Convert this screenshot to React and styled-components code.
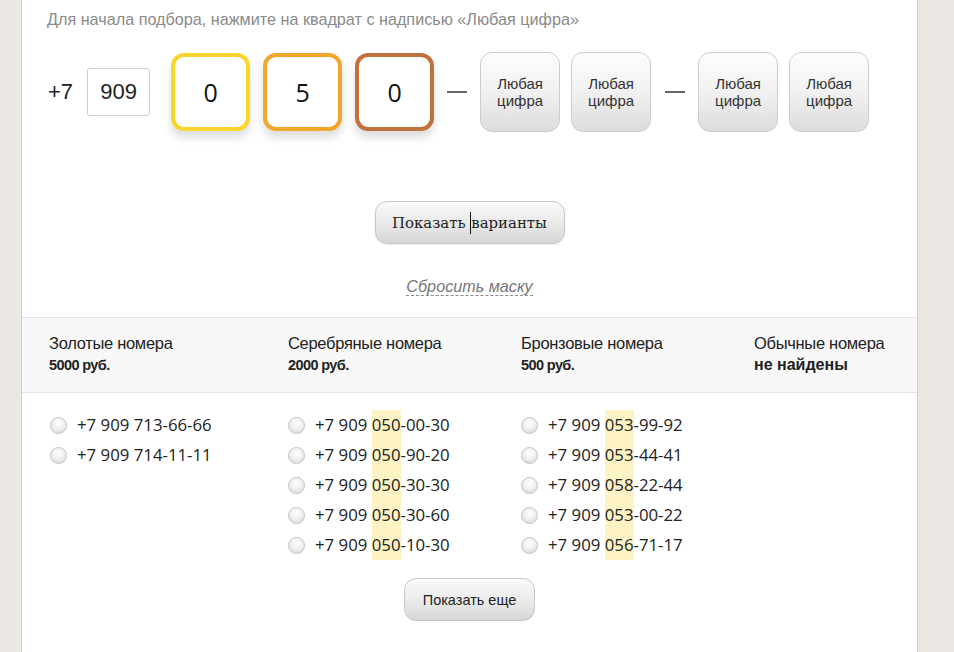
import React from "react";
import styled, { createGlobalStyle } from "styled-components";

const Global = createGlobalStyle`
  html, body { margin: 0; padding: 0; background: #ebe8e4; }
  body { font-family: Arial, "Liberation Sans", sans-serif; }
`;

const Page = styled.div`
  display: flex;
  padding-left: 21px;
  min-height: 652px;
`;

const Panel = styled.div`
  width: 895px;
  background: #fff;
  border-left: 1px solid #d3d0cb;
  border-right: 1px solid #d3d0cb;
  min-height: 652px;
`;

const Top = styled.div`
  padding: 9px 0 0 25px;
`;

const Intro = styled.div`
  font-family: "Liberation Sans", Arial, sans-serif;
  font-size: 16.2px;
  line-height: 20px;
  color: #8a8a8a;
`;

const PhoneRow = styled.div`
  display: flex;
  align-items: center;
  margin-top: 23px;
  height: 79px;
`;

const Prefix = styled.span`
  font-family: "Liberation Sans", Arial, sans-serif;
  font-size: 22px;
  color: #222;
  margin-left: 1px;
  margin-right: 14px;
`;

const CodeBox = styled.div`
  width: 61px;
  height: 46px;
  border: 1px solid #cfcfcf;
  border-radius: 3px;
  display: flex;
  align-items: center;
  justify-content: center;
  font-family: "Liberation Sans", Arial, sans-serif;
  font-size: 22px;
  color: #222;
  margin-right: 21px;
`;

const DigitBox = styled.div`
  box-sizing: border-box;
  width: 79px;
  height: 78px;
  border: 4px solid ${p => p.$color};
  border-radius: 13px;
  background: #fff;
  display: flex;
  align-items: center;
  justify-content: center;
  font-family: "Open Sans", sans-serif;
  font-size: 25px;
  color: #111;
  box-shadow: 0 7px 9px rgba(0, 0, 0, 0.13);
  margin-right: 13px;
`;

const Dash = styled.span`
  width: 20px;
  height: 2px;
  background: #666;
  margin: 0 13px 0 0;
`;

const AnyBox = styled.div`
  box-sizing: border-box;
  width: 80px;
  height: 80px;
  border: 1px solid #cdcdcd;
  border-radius: 12px;
  background: linear-gradient(#fdfdfd 0%, #f1f1f1 50%, #dcdcdc 100%);
  display: flex;
  align-items: center;
  justify-content: center;
  text-align: center;
  font-family: "Liberation Sans", Arial, sans-serif;
  font-size: 15px;
  line-height: 17px;
  color: #333;
  margin-right: ${p => (p.$last ? 14 : 11)}px;
`;

const Center = styled.div`
  display: flex;
  flex-direction: column;
  align-items: center;
`;

const ShowButton = styled.div`
  box-sizing: border-box;
  margin-top: 70px;
  width: 190px;
  height: 43px;
  border: 1px solid #c7c7c7;
  border-radius: 12px;
  background: linear-gradient(#fafafa, #e6e6e6 60%, #d6d6d6);
  display: flex;
  align-items: center;
  justify-content: center;
  font-family: "DejaVu Serif", "Liberation Serif", serif;
  font-size: 14.9px;
  color: #222;
  white-space: pre;
  box-shadow: 0 1px 2px rgba(0,0,0,0.08);
`;

const Caret = styled.span`
  display: inline-block;
  width: 1px;
  height: 22px;
  background: #111;
  vertical-align: middle;
`;

const Reset = styled.span`
  margin-top: 33px;
  font-family: "Liberation Sans", Arial, sans-serif;
  font-style: italic;
  font-size: 16.2px;
  line-height: 18px;
  color: #777;
  border-bottom: 1px dashed #888;
`;

const HeaderRow = styled.div`
  margin-top: 21px;
  border-top: 1px solid #e3e3e3;
  border-bottom: 1px solid #e3e3e3;
  background: #f8f8f8;
  height: 74px;
  box-sizing: content-box;
  display: grid;
  grid-template-columns: 239px 233px 233px 1fr;
  padding-left: 27px;
`;

const HeadCell = styled.div`
  padding-top: 15px;
  font-family: "Liberation Sans", Arial, sans-serif;
  color: #222;
`;

const HeadTitle = styled.div`
  font-size: 16.5px;
  line-height: 20px;
  letter-spacing: -0.3px;
`;

const HeadPrice = styled.div`
  font-size: ${p => (p.$big ? 16 : 14.5)}px;
  letter-spacing: ${p => (p.$big ? 0 : -0.6)}px;
  line-height: 24px;
  font-weight: bold;
`;

const ListGrid = styled.div`
  display: grid;
  grid-template-columns: 238px 233px 233px 1fr;
  padding: 17px 0 0 28px;
`;

const Col = styled.div`
  display: flex;
  flex-direction: column;
`;

const Row = styled.div`
  display: flex;
  align-items: center;
  height: 30px;
`;

const Radio = styled.span`
  box-sizing: border-box;
  width: 17px;
  height: 17px;
  border-radius: 50%;
  border: 1px solid #c3c3c3;
  background: radial-gradient(circle at 50% 35%, #ffffff 0%, #f0f0f0 45%, #d4d4d4 100%);
  margin-right: 10px;
  flex: none;
`;

const Number = styled.span`
  font-family: "Open Sans", sans-serif;
  font-size: 16.8px;
  line-height: 30px;
  color: #222;
  white-space: pre;
`;

const Mark = styled.span`
  display: inline-block;
  background: #fdf3c4;
  line-height: 30px;
  height: 30px;
`;

const MoreButton = styled.div`
  box-sizing: border-box;
  margin-top: 18px;
  width: 131px;
  height: 43px;
  border: 1px solid #c7c7c7;
  border-radius: 12px;
  background: linear-gradient(#fafafa, #e8e8e8 60%, #d6d6d6);
  display: flex;
  align-items: center;
  justify-content: center;
  font-family: "Liberation Sans", Arial, sans-serif;
  font-size: 14.5px;
  color: #222;
`;

const gold = ["713-66-66", "714-11-11"];
const silver = ["050-00-30", "050-90-20", "050-30-30", "050-30-60", "050-10-30"];
const bronze = ["053-99-92", "053-44-41", "058-22-44", "053-00-22", "056-71-17"];

function NumRow({ n, mark }) {
  return (
    <Row>
      <Radio />
      <Number>
        {"+7 909 "}
        {mark ? (
          <>
            <Mark>{n.slice(0, 3)}</Mark>
            {n.slice(3)}
          </>
        ) : (
          n
        )}
      </Number>
    </Row>
  );
}

export default function App() {
  return (
    <>
      <Global />
      <Page>
        <Panel>
          <Top>
            <Intro>Для начала подбора, нажмите на квадрат с надписью «Любая цифра»</Intro>
            <PhoneRow>
              <Prefix>+7</Prefix>
              <CodeBox>909</CodeBox>
              <DigitBox $color="#fbd52b">0</DigitBox>
              <DigitBox $color="#f2a62e">5</DigitBox>
              <DigitBox $color="#c0723a">0</DigitBox>
              <Dash />
              <AnyBox>Любая<br />цифра</AnyBox>
              <AnyBox $last>Любая<br />цифра</AnyBox>
              <Dash />
              <AnyBox>Любая<br />цифра</AnyBox>
              <AnyBox>Любая<br />цифра</AnyBox>
            </PhoneRow>
          </Top>
          <Center>
            <ShowButton>{"Показать "}<Caret />варианты</ShowButton>
            <Reset>Сбросить маску</Reset>
          </Center>
          <HeaderRow>
            <HeadCell>
              <HeadTitle>Золотые номера</HeadTitle>
              <HeadPrice>5000 руб.</HeadPrice>
            </HeadCell>
            <HeadCell>
              <HeadTitle>Серебряные номера</HeadTitle>
              <HeadPrice>2000 руб.</HeadPrice>
            </HeadCell>
            <HeadCell>
              <HeadTitle>Бронзовые номера</HeadTitle>
              <HeadPrice>500 руб.</HeadPrice>
            </HeadCell>
            <HeadCell>
              <HeadTitle>Обычные номера</HeadTitle>
              <HeadPrice $big>не найдены</HeadPrice>
            </HeadCell>
          </HeaderRow>
          <ListGrid>
            <Col>{gold.map(n => <NumRow key={n} n={n} />)}</Col>
            <Col>{silver.map(n => <NumRow key={n} n={n} mark />)}</Col>
            <Col>{bronze.map(n => <NumRow key={n} n={n} mark />)}</Col>
            <Col />
          </ListGrid>
          <Center>
            <MoreButton>Показать еще</MoreButton>
          </Center>
        </Panel>
      </Page>
    </>
  );
}
